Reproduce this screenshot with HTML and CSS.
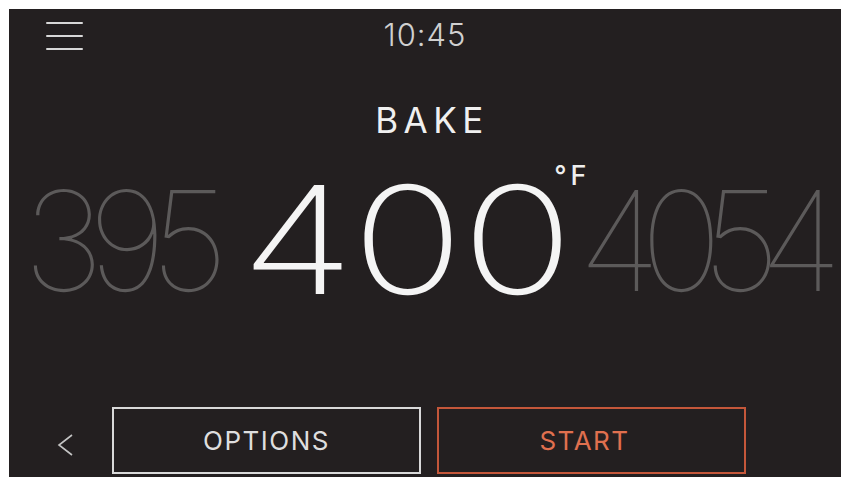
FILE: index.html
```html
<!DOCTYPE html>
<html lang="en">
<head>
<meta charset="UTF-8" />
<meta name="viewport" content="width=device-width, initial-scale=1" />
<title>Oven - Bake</title>
<link rel="stylesheet" href="styles.css">
</head>
<body>

<div class="screen">
  <header class="top-bar">
    <button class="menu-btn" aria-label="Menu">
      <span></span><span></span><span></span>
    </button>
    <div class="clock">10:45</div>
  </header>

  <h1 class="mode">BAKE</h1>

  <div class="temp-dial">
    <span class="temp temp-prev">395</span>
    <span class="temp temp-current">
      <span class="temp-digits">400</span><span class="unit">°F</span>
    </span>
    <span class="temp temp-next">4054</span>
  </div>

  <footer class="bottom-bar">
    <button class="back-btn" aria-label="Back">
      <svg width="18" height="22" viewBox="0 0 18 22">
        <path d="M16 1 L3 11 L16 21" fill="none" stroke="#c4c4c4" stroke-width="1.6" />
      </svg>
    </button>
    <button class="action-btn options-btn">OPTIONS</button>
    <button class="action-btn start-btn">START</button>
  </footer>
</div>

</body>
</html>
```

FILE: styles.css
```css
body {
  margin: 0;
  background: #ffffff;
  font-family: 'Inter', 'Noto Sans', sans-serif;
}

.screen {
  margin: 9px 0 0 9px;
  width: 832px;
  height: 468px;
  background: #231f20;
  color: #f2f2f2;
  display: flex;
  flex-direction: column;
  overflow: hidden;
}

.top-bar {
  height: 60px;
  display: grid;
  grid-template-columns: 1fr auto 1fr;
  align-items: start;
}

.menu-btn {
  margin: 13px 0 0 37px;
  width: 37px;
  padding: 0;
  background: none;
  border: none;
  display: flex;
  flex-direction: column;
  gap: 11px;
  cursor: pointer;
}

.menu-btn span {
  display: block;
  height: 2px;
  border-radius: 1px;
  background: #d8d8d8;
}

.clock {
  margin-top: 10px;
  font-size: 31px;
  line-height: 1;
  font-weight: 300;
  color: #d0d0d0;
  letter-spacing: 1px;
}

.mode {
  margin: 34px 0 0;
  padding-left: 14px;
  text-align: center;
  font-size: 35px;
  line-height: 1;
  font-weight: 400;
  letter-spacing: 5.5px;
  color: #f0f0f0;
}

.temp-dial {
  margin-top: 24px;
  padding-left: 14px;
  height: 157px;
  display: flex;
  align-items: center;
  white-space: nowrap;
}

.temp {
  font-weight: 100;
}

.temp-current {
  position: relative;
  display: flex;
  align-items: center;
  margin-left: 28px;
  font-size: 150px;
  line-height: 0.75;
  color: #f4f4f4;
}

/* the 400 is wider and rounder than Inter's digits */
.temp-digits {
  display: inline-block;
  margin-right: 69px;
  letter-spacing: -1.5px;
  font-weight: 200;
  transform: scaleX(1.23);
  transform-origin: left center;
}

.temp-prev,
.temp-next {
  font-size: 139px;
  line-height: 0.7;
  color: #5c5a5a;
}

.temp-prev {
  letter-spacing: -16px;
}

.temp-next {
  letter-spacing: -20.5px;
}

.unit {
  position: absolute;
  top: -19px;
  left: 100%;
  margin-left: -24px;
  font-size: 27px;
  line-height: 0.8;
  font-weight: 500;
  letter-spacing: 4px;
  color: #eeeeee;
}

.bottom-bar {
  margin-top: auto;
  margin-bottom: 3px;
  display: flex;
  align-items: center;
  gap: 16px;
}

.back-btn {
  width: 87px;
  height: 67px;
  padding: 9px 0 0 47px;
  background: none;
  border: none;
  display: flex;
  align-items: center;
  cursor: pointer;
}

.action-btn {
  width: 309px;
  height: 67px;
  background: transparent;
  font-family: inherit;
  font-size: 26px;
  font-weight: 400;
  letter-spacing: 1.5px;
  cursor: pointer;
}

.options-btn {
  border: 2px solid #d9d9d9;
  color: #dedede;
}

.start-btn {
  padding-right: 20px;
  border: 2px solid #c4573a;
  color: #e0704f;
}
```
